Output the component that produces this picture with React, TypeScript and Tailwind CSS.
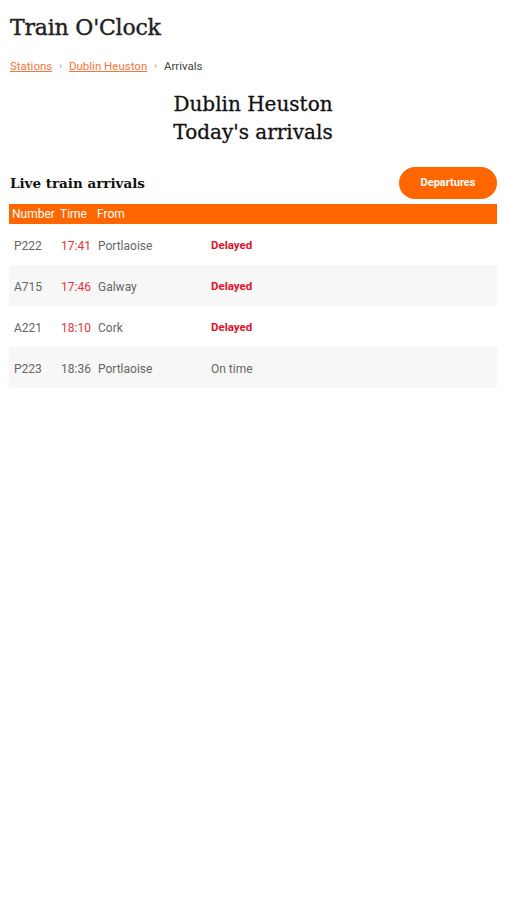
import React from "react";

const rows = [
  { n: "P222", t: "17:41", from: "Portlaoise", status: "Delayed", late: true },
  { n: "A715", t: "17:46", from: "Galway", status: "Delayed", late: true },
  { n: "A221", t: "18:10", from: "Cork", status: "Delayed", late: true },
  { n: "P223", t: "18:36", from: "Portlaoise", status: "On time", late: false },
];

export default function App() {
  const slab = { fontFamily: "'DejaVu Serif', serif" };
  return (
    <div className="w-[506px] h-[900px] bg-white font-['Roboto',sans-serif]">
      <div className="px-[10px] pt-[14px]">
        <h1 className="text-[22px] leading-[28px] text-[#222] tracking-[-0.2px] [-webkit-text-stroke:0.4px_#222]" style={slab}>
          Train O'Clock
        </h1>
        <div className="mt-[17px] flex items-center text-[11.5px] leading-[14px] text-[#444]">
          <span className="text-[#f5763a] underline">Stations</span>
          <span className="mx-[7px] text-[#888] text-[9px]">›</span>
          <span className="text-[#f5763a] underline">Dublin Heuston</span>
          <span className="mx-[7px] text-[#888] text-[9px]">›</span>
          <span>Arrivals</span>
        </div>
      </div>
      <div className="mt-[17px] text-center text-[20px] leading-[28px] text-[#111] [-webkit-text-stroke:0.3px_#111]" style={slab}>
        <div>Dublin Heuston</div>
        <div>Today's arrivals</div>
      </div>
      <div className="mt-[21px] px-[9px]">
        <div className="flex items-center justify-between">
          <div className="pl-[1px] text-[13.5px] font-bold text-[#111]" style={slab}>
            Live train arrivals
          </div>
          <div className="w-[98px] h-[32px] rounded-full bg-[#ff6600] flex items-center justify-center text-white text-[11px] font-bold">
            Departures
          </div>
        </div>
        <div className="mt-[5px] h-[20px] bg-[#ff6600] flex items-center text-white text-[12px]">
          <span className="w-[51px] pl-[3px]">Number</span>
          <span className="w-[37px]">Time</span>
          <span>From</span>
        </div>
        {rows.map((r, i) => (
          <div
            key={r.n}
            className={`h-[41px] pt-[2px] flex items-center text-[12px] text-[#666] ${i % 2 === 1 ? "bg-[#f7f7f7]" : "bg-white"}`}
          >
            <span className="w-[52px] pl-[5px]">{r.n}</span>
            <span className={`w-[37px] ${r.late ? "text-[#e8323c]" : ""}`}>{r.t}</span>
            <span className="w-[113px]">{r.from}</span>
            <span className={r.late ? "text-[#e0102a] font-bold text-[11.5px]" : ""}>{r.status}</span>
          </div>
        ))}
      </div>
    </div>
  );
}
